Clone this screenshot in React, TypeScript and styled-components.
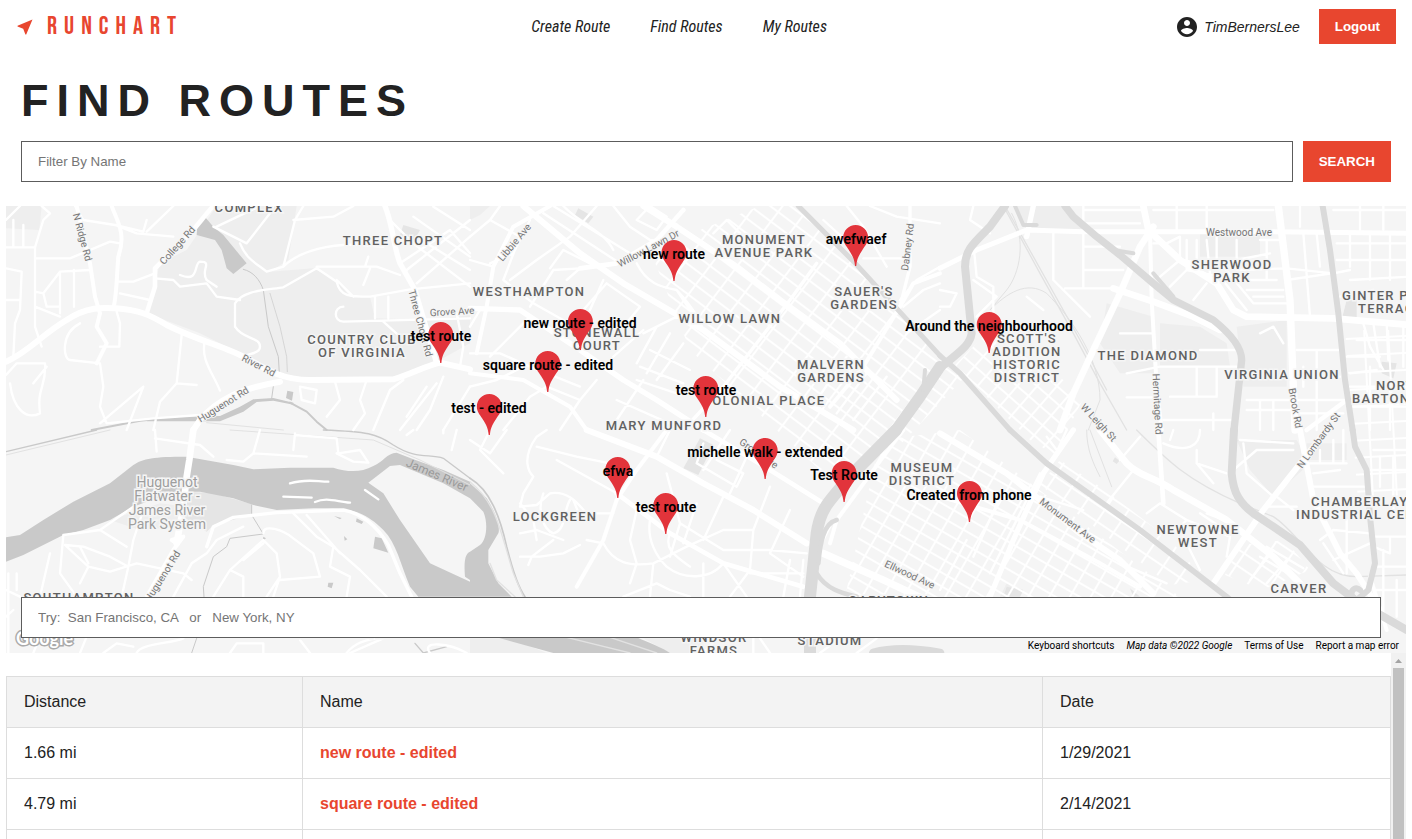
import React from "react";
import styled, { createGlobalStyle } from "styled-components";

const GlobalStyle = createGlobalStyle`
  *, *::before, *::after { box-sizing: border-box; }
  body {
    margin: 0;
    background: #fff;
    color: #222;
    font-family: Arial, "Liberation Sans", sans-serif;
    font-size: 16px;
  }
`;

const accent = "#e8462f";

const Page = styled.div`
  display: flex;
  flex-direction: column;
  height: 100vh;
  padding: 0 6px;
  overflow: hidden;
`;

const Header = styled.header`
  display: flex;
  justify-content: space-between;
  align-items: center;
  height: 53px;
  padding: 0 10px 0 9px;
  flex: none;
`;

const Brand = styled.a`
  display: flex;
  align-items: center;
  gap: 12px;
  color: ${accent};
  font-family: "Bebas Neue", "Roboto Condensed", "Liberation Sans Narrow", sans-serif;
  font-size: 25px;
  line-height: 30px;
  letter-spacing: 7px;
  text-decoration: none;
`;

const Nav = styled.nav`
  display: flex;
  gap: 40px;
`;

const NavLink = styled.a`
  color: #222;
  font-family: "Roboto Condensed", "Liberation Sans Narrow", sans-serif;
  font-size: 16px;
  font-style: italic;
  text-decoration: none;
`;

const Account = styled.div`
  display: flex;
  align-items: center;
`;

const UserName = styled.span`
  margin: 0 19px 0 5px;
  font-size: 14px;
  font-style: italic;
`;

const Button = styled.button<{ $tall?: boolean }>`
  height: ${(p) => (p.$tall ? 41 : 35)}px;
  padding: 0 16px;
  border: 0;
  background: ${accent};
  color: #fff;
  font-weight: bold;
  cursor: pointer;
`;

const Title = styled.h1`
  margin: 21px 0 14px 15px;
  font-size: 45px;
  line-height: 53px;
  letter-spacing: 8px;
  text-transform: uppercase;
  flex: none;
`;

const SearchForm = styled.form`
  display: flex;
  gap: 10px;
  margin: 0 15px 24px;
  flex: none;
`;

const TextBox = styled.input`
  flex: 1;
  min-width: 0;
  height: 41px;
  padding: 0 16px;
  border: 1px solid #5c5c5c;
  border-radius: 0;
  background: #fff;
  color: #222;
  &::placeholder { color: #757575; }
`;

const MapFrame = styled.section`
  position: relative;
  height: 447px;
  flex: none;
  overflow: hidden;
  background: #f5f5f5;
  font-family: Roboto, sans-serif;
`;

const MapDrawing = styled.svg`
  display: block;
  width: 100%;
  height: 100%;
`;

const Pin = styled.button`
  position: absolute;
  display: grid;
  justify-items: center;
  padding: 0;
  border: 0;
  background: none;
  transform: translateX(-50%);
  cursor: pointer;
  > * { grid-area: 1 / 1; }
`;

const PinLabel = styled.span`
  padding-top: 6px;
  color: #000;
  font-family: Roboto, sans-serif;
  font-size: 14px;
  font-weight: 600;
  line-height: 16px;
  white-space: nowrap;
`;

const LocationForm = styled.form`
  position: absolute;
  left: 15px;
  right: 25px;
  bottom: 15px;
  display: flex;
`;

const Attribution = styled.div`
  position: absolute;
  right: 0;
  bottom: 0;
  display: flex;
  gap: 12px;
  padding: 0 7px;
  background: rgba(245, 245, 245, 0.7);
  color: #000;
  font-size: 10px;
  line-height: 14px;
`;

const MapLink = styled.a`
  color: inherit;
  text-decoration: none;
`;

const Results = styled.section`
  display: flex;
  flex: 1;
  min-height: 0;
`;

const TableArea = styled.div`
  flex: 1;
  padding-top: 23px;
  overflow: hidden;
`;

const Scrollbar = styled.div`
  display: flex;
  flex-direction: column;
  align-items: center;
  width: 15px;
  background: #f1f1f1;
`;

const ScrollUp = styled.svg`
  width: 15px;
  height: 15px;
  flex: none;
`;

const Thumb = styled.div`
  flex: 1;
  width: 11px;
  background: #c1c1c1;
`;

const Table = styled.table`
  width: 100%;
  border-collapse: collapse;
  table-layout: fixed;
`;

const Column = styled.col<{ $share?: number }>`
  width: ${(p) => (p.$share ? `${p.$share}px` : "auto")};
`;

const cell = `
  height: 51px;
  padding: 0 17px;
  border: 1px solid #ddd;
  text-align: left;
`;

const HeadCell = styled.th`
  ${cell}
  background: #f3f3f3;
  font-weight: normal;
`;

const Cell = styled.td`
  ${cell}
`;

const RouteLink = styled.a`
  color: ${accent};
  font-weight: bold;
  text-decoration: none;
`;

/* ---- map data ---- */

type Stroke = [string, number];

interface Tile {
  x: number;
  y: number;
  parks?: string;
  darkParks?: string;
  water?: string;
  streams?: Stroke[];
  rails?: Stroke[];
  streets?: string;
  roads?: Stroke[];
  highways?: Stroke[];
}

/* Each tile is drawn at three units to the pixel. */
const tiles: Tile[] = [
  {
    x: 0,
    y: 200,
    parks:
      "M18 18H125L118 90L18 85zM650 18H890L865 180L810 215L940 205L1010 240L1050 290L1110 290L1125 355L1300 360L1410 345L1410 430L1320 480L1180 535L900 540L840 525L740 470L600 400L440 340L480 190L560 150z",
    darkParks: "M1210 75L1260 90L1240 125L1200 105z",
    water:
      "M610 45L640 80L670 105L740 190L700 222L680 205L665 150L645 120L590 105L592 75zM862 572l18 4l-4 26l-18 -8zM460 655L600 648L660 648L720 620L760 598L820 594L880 608L880 614L820 602L770 606L730 635L660 664L600 664L440 664z",
    streams: [
      ["M730 208C760 215 780 240 790 270L805 380L835 470L838 520M820 560L815 595", 3],
      ["M275 690L420 662L480 656M870 608L920 635L950 665L980 690", 6],
      ["M810 280L840 380L860 470L862 515", 2],
    ],
    rails: [["M620 668L850 690", 3]],
    streets:
      "M225 18L250 60L345 75L410 100L520 110M18 60L60 18M18 142H105L130 60L150 40L125 18M40 142V60M70 142V75M105 142V175H210L330 125L360 130M105 175V380L125 440M18 205L65 215L60 330L45 370L40 470M18 300H60M105 275L130 280L180 215L270 210M130 280L140 320L180 320M180 215V340M222 210V320M105 320L180 350M240 370C180 400 190 480 210 480L300 490L310 560L300 620L320 670L460 655L600 645M350 335L360 370L358 440L300 440M350 245L400 245L465 220M360 280L450 300M18 525L50 490L135 490C140 560 110 560 120 640C80 660 40 630 30 550M140 500L100 550M545 405L530 550L480 605L460 690M530 550L590 555M615 420C600 480 640 520 660 572M465 235L520 240L540 260L620 250L650 290L720 300M540 225C600 250 580 190 600 185C640 185 600 210 620 240L650 260M705 380V310C730 270 800 270 850 262L950 205M740 130L810 40L820 18M720 130C740 180 770 190 800 215L850 200L885 60L910 18M850 200C900 150 1000 130 1080 135L1150 140M880 60L1000 50L1060 18M640 80L740 130M950 205L1010 245C1020 290 1050 290 1110 290L1230 268L1410 250M705 380C730 420 780 410 780 440C780 460 750 460 730 470M345 75L430 95L440 60M440 95L520 18M650 80L780 18M950 200L1130 200L1200 225M1090 255L1110 205M1095 200L1105 170M1010 240L1060 290M1125 290V355M1165 290V355M1030 320C1000 320 1000 365 1030 365L1410 355M1150 365L1200 410M1200 190L1350 90L1410 160M1220 210L1410 60M1250 250L1410 110M1170 60L1240 130L1410 260M1280 130L1410 210M1240 50L1410 170M1300 20L1410 90M1370 340L1390 440L1380 500M900 565L905 600L945 610L950 570L900 560M1005 545L1020 600L980 650M1100 540L1080 600L1095 640L1060 690M1210 540L1170 570L1120 690M1330 530L1290 630L1250 690M1310 550L1200 690M1410 560L1330 690M1280 560L1220 650M380 690L430 560L300 670",
    roads: [
      ["M18 485C80 460 130 400 200 360C260 320 310 322 345 325C420 330 450 345 500 375C600 425 680 440 740 475C800 510 850 540 930 540L1180 538C1240 520 1270 500 1320 488L1410 508", 18],
      ["M580 690L600 660C650 600 720 565 840 545", 18],
      ["M230 18L270 190L285 290L300 340L290 380L320 430L290 490", 12],
      ["M1155 18C1180 80 1180 140 1200 190L1245 270L1310 490", 16],
      ["M640 18C600 60 590 90 500 170L465 205L465 260L440 340", 14],
      ["M335 18C350 60 380 100 355 170C350 230 350 290 340 325", 12],
    ],
  },
  {
    x: 470,
    y: 200,
    parks: "M0 18H60L30 45L0 60z",
    darkParks: "M325 25L370 50L355 70L315 45z",
    streets:
      "M0 110L60 60L150 110L100 240M60 190L130 160L180 60M0 180L70 200L110 140M60 60L90 18M120 240L200 180L300 110L380 18M250 210L330 205L290 240M240 205L280 150L390 205M220 40L450 190M250 18L480 160M280 18C340 80 400 90 430 150M500 60L540 18L590 50L560 90L500 60M430 18L480 80L540 120L620 130M340 330L410 250L510 320L460 380M400 240L360 330M180 320L250 210M100 240L190 310L350 400M0 380L30 330M60 470L110 420L180 350M0 460L90 460L180 500L330 560M0 560L80 540L160 500M100 690L180 590L230 560L330 600L380 540M270 690L330 600M420 690L520 540M520 400L620 350L700 390M430 470L520 390M500 490L560 380M530 520L600 400M560 540L640 430M500 540L620 580M510 500L640 550M540 450L660 510M440 600L620 680M500 190C530 250 570 260 620 270L700 390M700 390C680 330 620 270 620 270M730 100L770 60L810 100M1130 18L1180 80L1250 200M1060 60L1170 160M1200 18L1280 50L1410 70M1180 175H1310M1290 300L1340 240L1410 200M1300 320L1360 270L1410 250M1310 400L1410 330M1100 640L1190 520M1150 660L1250 530M1040 600L1130 470",
    roads: [
      ["M160 18L330 160L460 250L700 390L930 560L1150 690", 18],
      ["M520 18L620 80L800 200L930 300L1110 430L1280 600", 18],
      ["M0 325L150 330L330 450L460 540L560 600L700 690", 16],
      ["M0 520L160 540L300 620L350 690", 12],
      ["M240 18L130 80L70 200L50 320L20 460", 12],
      ["M330 205L440 190L560 120L640 30", 14],
      ["M1410 220L1330 250L1290 320L1180 500L1080 620", 12],
      ["M1320 18V200L1290 320", 10],
      ["M640 690L760 560L860 430L960 300L1040 190", 10],
    ],
    highways: [
      ["M985 18L1156 190L1410 467", 15],
      ["M1410 500L1350 590L1278 690", 34],
      ["M1365 510L1360 570", 12],
    ],
  },
  {
    x: 940,
    y: 200,
    parks:
      "M230 18H380L440 90H260zM780 100H960V170H780zM500 310L640 350L645 520L540 520L480 430zM660 370L780 380L860 430L870 500H660zM890 380L1040 360L1040 560H910z",
    darkParks: "M1325 485L1370 490L1360 535L1325 520zM1205 360L1220 300L1250 300L1250 360z",
    rails: [
      ["M190 18L300 220L400 400L480 550L560 690M195 18L420 420L500 570", 4],
      ["M215 40C260 120 240 220 200 270L150 330C200 280 260 240 320 280C400 360 480 480 480 600L445 690", 3],
    ],
    streets:
      "M100 18L90 60L150 100M430 18V260M430 140H540M430 210H550M375 265H530M340 100V240L450 350M430 30H610M430 70H600M710 18V90M800 18V90M640 30H1000M640 130H680L720 110V180M660 230L720 180L850 200L940 310H1040M690 260L740 210L840 230L920 330M760 300L800 250M740 120V210M770 120V190M800 120L810 220M830 110V200M890 180V120M890 180L990 160M890 210L1040 205L1180 220L1230 210M900 240H1010M920 270H1030M940 290H1030M1040 240L1210 215M960 120H1030M980 120V240M1080 18V80M1130 100L1140 200M1090 100L1110 350M1180 30H1410M1260 18V90M1330 18V90M1230 100V200M1290 100V240M1350 100V240M1190 130H1410M1190 180H1410M1230 240L1410 230M1200 290L1300 270M1270 370L1290 440L1330 510M1300 370L1320 500M1340 370L1345 480M1390 370V500M1250 420H1410M1220 470H1320M1230 520L1310 510M1230 560H1410M1240 620H1410M1290 500V690M1350 560V690M1070 450H1200M1070 530H1200M1070 600H1210M1070 640H1210M1130 450V690M1090 500V560M960 400L1000 380L1030 430M780 450H890M560 520L660 500H890M770 500V590L690 590M830 500V590H770M560 592H650M920 600H1050M920 630H1050M960 600V690M1000 600V690M670 660H880M820 640V690M640 400H540M100 130L110 230L160 260L160 340M0 270L50 280L30 320L0 320M100 240L170 290L110 350M260 290L310 330",
    roads: [
      ["M0 205L110 150L260 90L430 95L1000 95L1410 100", 15],
      ["M260 110L280 18", 16],
      ["M610 18L625 90L720 180L830 250L880 330L920 350L1180 355L1410 375", 20],
      ["M1015 18L1050 300L1065 690", 22],
      ["M640 80L600 140L540 280L460 450L400 580L360 690", 20],
      ["M520 265L640 305L760 350L840 390", 20],
      ["M630 90L635 300L650 560L665 690", 12],
      ["M1220 600L1100 690", 14],
    ],
    highways: [
      ["M375 18L400 50L470 110L540 165L640 250L700 300L820 360C870 400 905 440 905 480L882 690", 22],
      ["M470 110L520 150L580 160M640 220L700 290", 12],
      ["M1148 18L1170 150L1195 340L1215 540L1238 690", 18],
      ["M195 18L150 80C100 130 75 150 75 200L85 300L95 400C90 440 50 460 0 505", 24],
      ["M225 18L250 75L290 75", 12],
      ["M0 467L60 520L210 690", 16],
    ],
  },
  {
    x: 0,
    y: 430,
    parks: "M330 270L480 220L560 230L540 290L420 300z",
    darkParks: "M560 185L640 190L755 222L755 255L640 285L620 305L550 260z",
    water:
      "M18 322L60 315L130 270L220 215L330 160L400 105C430 85 460 80 560 80L700 105L760 118L870 113L1000 113C1040 125 1080 130 1120 108C1150 95 1160 70 1190 68L1240 88L1330 120L1410 155V205L1330 160L1200 105L1170 108L1105 158L1150 190L1200 270L1290 400L1410 455V669H1410V500H1255L1230 470C1200 400 1190 340 1150 300C1100 250 1060 238 1000 235L940 235L830 240L760 225L700 205L600 185L560 185L480 200L400 230L330 270L250 300L190 315L130 345L70 375L18 395zM1395 440C1390 380 1400 370 1410 365V450zM1125 320L1145 325L1165 368L1120 355zM985 458H1000L995 475L983 470zM1070 265L1090 275L1085 282L1068 275zM1002 258L1025 264L1020 268zM1032 318L1042 328L1034 332zM790 320L798 325L788 332z",
    streams: [
      ["M755 225V255L790 312L690 325L680 350L640 380L610 470L612 500M590 625L575 669", 3],
      ["M1245 640L1270 669L1340 650", 4],
      ["M18 65L290 0M970 0C1100 5 1130 10 1180 45C1250 90 1290 70 1330 85L1410 145", 4],
    ],
    rails: [["M18 75L330 0M690 0L1120 30L1260 90L1410 165", 3]],
    streets:
      "M870 160C920 145 950 155 985 155M850 200L935 203M945 216C980 200 1010 215 1050 218M1095 180L1135 208M18 480L60 500M50 430V480M190 315L300 300L400 230M150 370L120 500M190 315L180 430L230 500M195 345L265 410L330 425L410 400L550 430L575 450M265 410L240 460M300 300L380 350M430 240L400 330L385 410L365 500M195 345L250 350L330 380L385 410M240 350L265 400M520 500L575 400L620 370L650 330L730 290M640 500L690 420L790 330L830 370L840 440L800 500M690 420L730 440V500M730 390L790 340M790 310C790 280 850 300 880 325L940 370L960 440L840 450M880 250L950 320L1000 350L1080 420L1160 500M1000 350L990 410L1050 440L1040 500M920 255L1020 370M840 440L820 500M465 0L470 65M465 25L600 45L640 80M680 90L730 95L760 70L920 80M760 70L780 0M885 10L880 60M885 15L1010 25L1015 70L1080 60L1105 98L1060 95L1010 70M1240 0L1220 15M1330 10V0M1370 0L1355 60M18 560L40 540M240 669L260 620M310 669L350 640L400 650M410 669C420 640 520 640 550 625M690 669L710 640H790V669M930 669L900 630M1040 669C1070 630 1120 625 1150 625L1050 669M1290 669C1260 630 1350 640 1400 669M100 669L120 620M25 430V669",
    roads: [
      ["M580 0L568 90L560 140L550 230L530 340", 20],
      ["M530 340L515 330L550 320L520 360L440 500", 12],
      ["M620 350L640 290L700 262L830 248L1030 240C1110 255 1150 320 1165 345L1200 430L1235 500", 10],
    ],
  },
  {
    x: 470,
    y: 430,
    parks: "M0 625H120L230 669H0zM520 625H700V669H600z",
    darkParks: "M690 25L730 45L685 135L640 115z",
    water:
      "M0 160L50 205C85 260 90 300 85 310L55 360L55 400L85 460L125 500H0V365L30 345C50 330 55 280 40 245L0 205zM80 622H500C540 640 580 655 600 669H250z",
    streams: [["M0 145C60 180 90 260 110 350C130 430 150 480 165 500", 5]],
    rails: [["M0 155C80 220 90 300 130 430L160 500M60 400L80 450L135 500M290 622L480 669M420 622L560 669", 4]],
    streets:
      "M60 0L30 60L100 130M0 30L60 70L110 0M200 20C150 90 180 130 190 140L160 190L150 230L200 225L240 190C300 180 330 230 350 250L430 250M150 220L190 270L200 330M220 190C200 240 220 300 250 310C290 300 280 240 300 210M200 20L230 0M200 50L320 80L420 100M260 90L440 190M150 310L200 300L280 330M350 330L400 340M310 210L330 260M150 380H210L280 370L330 345M175 405L185 380L250 330M500 240L480 330L500 400L480 460M540 270C530 330 560 380 590 410C640 450 720 450 760 400M400 340C430 400 480 410 550 400L650 350L760 300L850 300M600 310C580 360 620 380 660 410M590 130L630 280L600 380M760 200L700 330M630 280L760 360H900L1010 370M850 300L840 420L780 500M700 400V500M760 400L830 500M960 390L940 500M900 370L1000 440M1000 390L990 500M840 430H1000M550 400L540 500M460 500L560 460L600 480L660 500M600 0L560 80M700 40L680 100L800 170L820 130L740 90M830 80L780 190M900 170L850 300M960 240L900 370M640 340L680 220M780 0L700 120M1090 270L1060 330M850 625V669M900 669L870 625M700 669L740 625M1050 669L1110 625M1160 669L1220 625",
    roads: [
      ["M350 0L560 80L700 160L850 240L1010 340", 18],
      ["M440 190L600 310L760 400L1000 470", 14],
      ["M1060 370L1240 450L1410 530", 22],
      ["M590 0L500 120L440 210L400 330L320 470", 12],
      ["M700 0L900 120L1060 220", 14],
      ["M1080 340L1100 270L1240 80L1300 0", 12],
    ],
    highways: [
      ["M1278 0L1150 130C1070 220 1050 240 1040 310L1020 500V669", 36],
      ["M1040 430C1070 480 1120 490 1160 500M1100 270C1060 280 1050 340 1045 400", 14],
      ["M1210 669C1260 655 1330 655 1410 669", 26],
    ],
  },
  {
    x: 940,
    y: 430,
    parks: "M890 30H1070L1110 100L1000 200L930 120zM180 500L200 460L250 480L240 500zM1100 40H1220V90H1100z",
    darkParks: "M525 82L538 92L530 102L518 94zM570 475L600 500H580zM200 470L250 480L240 500H190z",
    rails: [
      ["M590 0C680 90 740 150 900 220L1000 260C1080 310 1130 440 1250 440L1400 435", 4],
      ["M440 0C440 60 460 100 480 140M450 0L515 170", 3],
    ],
    streets:
      "M670 40C740 70 780 50 780 0M770 60V100L820 160M770 100L860 130M900 30L1060 40M910 40L920 130L1000 200M880 120L950 60H1060M1100 100H1220M1140 60V100M1180 30V100M1210 0V100M1120 170H1280M1120 130L1200 120M1290 120H1400M1320 80V170M1300 60H1400M1360 80V240M1140 330L1180 300L1290 310M1150 340L1210 430M1180 390L1290 340M1220 270V430M1300 320H1400M1300 350L1350 370V320M1310 410H1400M1330 360V560M1370 450V560M1310 480H1400M620 250L660 220L740 270L700 310M740 270L870 320L860 380M800 250L880 280M840 290L780 250M580 120L500 220M430 240L300 200M300 130L240 250M980 350L1090 415M960 380L1060 440M1000 360L930 450M1040 390L980 460M1010 200L1060 240M980 230H1070M730 320L780 420M540 400L680 460M180 200L100 380M80 330L0 480M240 250L150 430M540 90L600 20M700 0L690 30M350 60L320 20M380 0L330 110",
    roads: [
      ["M0 10L100 70L200 130L300 210L420 310L540 390L640 490", 18],
      ["M400 0L310 130L220 330L150 500", 16],
      ["M480 0L560 100C600 140 640 140 700 180L860 270L1000 380L1080 460", 20],
      ["M655 0L670 220", 14],
      ["M1080 0L1120 210L1200 370L1250 430L1320 540", 18],
      ["M1160 0L970 240L820 460", 18],
      ["M0 200L240 270L480 400L600 470", 12],
      ["M1290 440L1340 600", 12],
    ],
    highways: [
      ["M210 0L320 100L600 300L860 500L930 560", 17],
      ["M882 0L875 130C880 190 900 220 940 250L1000 290L1080 345L1180 460L1260 520L1400 600", 24],
      ["M1238 0L1245 50L1280 120L1290 260L1305 400L1285 480L1250 510C1220 500 1240 460 1260 480", 18],
    ],
  },
];

interface Grid {
  id: string;
  angle: number;
  w: number;
  h: number;
  area: string;
}

const grids: Grid[] = [
  { id: "avenues", angle: 37, w: 22, h: 12, area: "M650 250L760 206L800 206L962 380L900 445L820 470L690 350z" },
  { id: "museum", angle: 30, w: 18, h: 12, area: "M880 440L960 430L1000 460L1180 597H845L862 520z" },
  { id: "scotts", angle: 41, w: 15, h: 13, area: "M985 335L1020 350L1085 395L1055 455L1030 440L955 365z" },
  { id: "newtowne", angle: 34, w: 20, h: 14, area: "M1105 490L1170 540L1205 580L1170 585L1040 485L1060 460zM1240 545L1285 540L1310 570L1262 590L1225 575z" },
  { id: "northside", angle: -3, w: 24, h: 17, area: "M1345 330H1406V500H1358z" },
];

const areaLabels: { x: number; y: number; lines: string[]; start?: boolean }[] = [
  { x: 249, y: 212, lines: ["COMPLEX"] },
  { x: 393, y: 245, lines: ["THREE CHOPT"] },
  { x: 529, y: 296, lines: ["WESTHAMPTON"] },
  { x: 362, y: 344, lines: ["COUNTRY CLUB", "OF VIRGINIA"] },
  { x: 764, y: 244, lines: ["MONUMENT", "AVENUE PARK"] },
  { x: 730, y: 323, lines: ["WILLOW LAWN"] },
  { x: 597, y: 337, lines: ["STONEWALL", "COURT"] },
  { x: 864, y: 296, lines: ["SAUER'S", "GARDENS"] },
  { x: 831, y: 369, lines: ["MALVERN", "GARDENS"] },
  { x: 764, y: 405, lines: ["COLONIAL PLACE"] },
  { x: 664, y: 430, lines: ["MARY MUNFORD"] },
  { x: 922, y: 472, lines: ["MUSEUM", "DISTRICT"] },
  { x: 555, y: 521, lines: ["LOCKGREEN"] },
  { x: 1027, y: 343, lines: ["SCOTT'S", "ADDITION", "HISTORIC", "DISTRICT"] },
  { x: 1148, y: 360, lines: ["THE DIAMOND"] },
  { x: 1282, y: 379, lines: ["VIRGINIA UNION"] },
  { x: 1232, y: 269, lines: ["SHERWOOD", "PARK"] },
  { x: 1342, y: 300, lines: ["GINTER PARK"], start: true },
  { x: 1358, y: 313, lines: ["TERRACE"], start: true },
  { x: 1376, y: 390, lines: ["NORTH"], start: true },
  { x: 1352, y: 403, lines: ["BARTON HEIGHTS"], start: true },
  { x: 1311, y: 506, lines: ["CHAMBERLAYNE"], start: true },
  { x: 1296, y: 519, lines: ["INDUSTRIAL CENTER"], start: true },
  { x: 1198, y: 534, lines: ["NEWTOWNE", "WEST"] },
  { x: 1299, y: 593, lines: ["CARVER"] },
  { x: 889, y: 605, lines: ["CARYTOWN"] },
  { x: 79, y: 602, lines: ["SOUTHAMPTON"] },
  { x: 346, y: 638, lines: ["STRATFORD HILLS"] },
  { x: 714, y: 642, lines: ["WINDSOR", "FARMS"] },
  { x: 830, y: 645, lines: ["STADIUM"] },
  { x: 1180, y: 638, lines: ["DISTRICT"] },
];

const streetLabels: [string, number, number, number][] = [
  ["N Ridge Rd", 83, 237, 75],
  ["College Rd", 177, 245, -48],
  ["Huguenot Rd", 223, 404, -32],
  ["River Rd", 259, 365, 27],
  ["Three Chopt Rd", 421, 323, 75],
  ["Grove Ave", 452, 311, -3],
  ["Libbie Ave", 514, 242, -50],
  ["Willow Lawn Dr", 648, 248, -28],
  ["Dabney Rd", 907, 247, -83],
  ["Westwood Ave", 1239, 232, 0],
  ["Hermitage Rd", 1158, 404, 87],
  ["W Leigh St", 1099, 422, 47],
  ["Brook Rd", 1296, 408, 80],
  ["N Lombardy St", 1318, 440, -54],
  ["Monument Ave", 1068, 520, 37],
  ["Ellwood Ave", 910, 574, 25],
  ["Grove Ave", 759, 453, 35],
  ["Huguenot Rd", 162, 576, -58],
];

const pins: { name: string; x: number; y: number }[] = [
  { name: "awefwaef", x: 856, y: 225 },
  { name: "new route", x: 674, y: 240 },
  { name: "new route - edited", x: 580, y: 309 },
  { name: "Around the neighbourhood", x: 989, y: 312 },
  { name: "test route", x: 441, y: 322 },
  { name: "square route - edited", x: 548, y: 351 },
  { name: "test route", x: 706, y: 376 },
  { name: "test - edited", x: 489, y: 394 },
  { name: "michelle walk - extended", x: 765, y: 438 },
  { name: "efwa", x: 618, y: 457 },
  { name: "Test Route", x: 844, y: 461 },
  { name: "Created from phone", x: 969, y: 481 },
  { name: "test route", x: 666, y: 493 },
];

const routes = [
  { distance: "1.66 mi", name: "new route - edited", date: "1/29/2021" },
  { distance: "4.79 mi", name: "square route - edited", date: "2/14/2021" },
  { distance: "2.31 mi", name: "test route", date: "2/14/2021" },
];

const view = { x: 6, y: 206, w: 1400, h: 447 };

function Layer({ draw }: { draw: (tile: Tile) => React.ReactNode }) {
  return (
    <>
      {tiles.map((tile) => (
        <g key={`${tile.x}-${tile.y}`} transform={`translate(${tile.x} ${tile.y}) scale(${1 / 3})`}>
          {draw(tile)}
        </g>
      ))}
    </>
  );
}

const strokes = (list: Stroke[] | undefined, color: string) =>
  list?.map(([d, width]) => (
    <path key={d} d={d} fill="none" stroke={color} strokeWidth={width} strokeLinejoin="round" strokeLinecap="round" />
  ));

function StreetMap() {
  return (
    <MapDrawing
      viewBox={`${view.x} ${view.y} ${view.w} ${view.h}`}
      preserveAspectRatio="xMidYMid slice"
      aria-label="Map of Richmond, Virginia"
    >
      <defs>
        {grids.map((g) => (
          <pattern key={g.id} id={g.id} width={g.w} height={g.h} patternUnits="userSpaceOnUse" patternTransform={`rotate(${g.angle})`}>
            <path d={`M0 1H${g.w}M1 0V${g.h}`} stroke="#fff" strokeWidth="2" />
          </pattern>
        ))}
      </defs>
      <Layer
        draw={(t) => (
          <>
            <path d={t.parks} fill="#eee" />
            <path d={t.darkParks} fill="#e5e5e5" />
            <path d={t.water} fill="#c9c9c9" />
            {strokes(t.streams, "#c9c9c9")}
            {strokes(t.rails, "#e2e2e2")}
          </>
        )}
      />
      {grids.map((g) => (
        <path key={g.id} d={g.area} fill={`url(#${g.id})`} />
      ))}
      <Layer
        draw={(t) => (
          <path d={t.streets} fill="none" stroke="#fff" strokeWidth="7" strokeLinejoin="round" strokeLinecap="round" />
        )}
      />
      <Layer draw={(t) => strokes(t.roads, "#fff")} />
      <Layer draw={(t) => strokes(t.highways, "#dadada")} />
      <g fontSize="13" fontWeight="500" letterSpacing="0.1em" fill="#616161" stroke="#f5f5f5" strokeWidth="3" paintOrder="stroke">
        {areaLabels.map((label) =>
          label.lines.map((line, i) => (
            <text key={`${label.x}-${line}`} x={label.x} y={label.y + i * 13} textAnchor={label.start ? "start" : "middle"}>
              {line}
            </text>
          ))
        )}
      </g>
      <g fontSize="10" fill="#757575" stroke="#f5f5f5" strokeWidth="2" paintOrder="stroke" textAnchor="middle">
        {streetLabels.map(([name, x, y, angle]) => (
          <text key={`${name}-${x}`} transform={`translate(${x} ${y}) rotate(${angle})`} dy="4">
            {name}
          </text>
        ))}
      </g>
      <text transform="translate(437 475) rotate(23)" dy="4" fontSize="12" fill="#999" textAnchor="middle">
        James River
      </text>
      <g fontSize="14" fill="#9e9e9e" stroke="#f5f5f5" strokeWidth="3" paintOrder="stroke" textAnchor="middle">
        {["Huguenot", "Flatwater -", "James River", "Park System"].map((line, i) => (
          <text key={line} x="167" y={487 + i * 14}>
            {line}
          </text>
        ))}
      </g>
      <text x="16" y="645" fontFamily="Lato, sans-serif" fontSize="18" fontWeight="700" fill="#fff" stroke="#aaa" strokeWidth="3" paintOrder="stroke">
        Google
      </text>
    </MapDrawing>
  );
}

export default function App() {
  const stop = (e: React.FormEvent) => e.preventDefault();
  return (
    <>
      <GlobalStyle />
      <Page>
        <Header>
          <Brand href="#home">
            <svg width="20" height="20" viewBox="0 0 24 24" fill="currentColor" aria-hidden="true">
              <path d="M21 3L3 10.53v.98l6.84 2.65L12.48 21h.98L21 3z" />
            </svg>
            RUNCHART
          </Brand>
          <Nav>
            <NavLink href="#create">Create Route</NavLink>
            <NavLink href="#find">Find Routes</NavLink>
            <NavLink href="#mine">My Routes</NavLink>
          </Nav>
          <Account>
            <svg width="24" height="24" viewBox="0 0 24 24" fill="currentColor" aria-hidden="true">
              <path d="M12 2C6.48 2 2 6.48 2 12s4.48 10 10 10 10-4.48 10-10S17.52 2 12 2zm0 3c1.66 0 3 1.34 3 3s-1.34 3-3 3-3-1.34-3-3 1.34-3 3-3zm0 14.2c-2.5 0-4.71-1.28-6-3.22.03-1.99 4-3.08 6-3.08 1.99 0 5.97 1.09 6 3.08-1.29 1.94-3.5 3.22-6 3.22z" />
            </svg>
            <UserName>TimBernersLee</UserName>
            <Button type="button">Logout</Button>
          </Account>
        </Header>

        <Title>Find Routes</Title>

        <SearchForm onSubmit={stop}>
          <TextBox type="text" aria-label="Filter by name" placeholder="Filter By Name" />
          <Button $tall type="submit">SEARCH</Button>
        </SearchForm>

        <MapFrame>
          <StreetMap />
          {pins.map((pin) => (
            <Pin
              key={`${pin.x}-${pin.y}`}
              type="button"
              style={{
                left: `${((pin.x - view.x) / view.w) * 100}%`,
                top: `${((pin.y - view.y) / view.h) * 100}%`,
              }}
            >
              <svg width="26" height="42" viewBox="0 0 26 42" aria-hidden="true">
                <path
                  fill="#e2343b"
                  d="M13 0C6 0 .5 5.600.5 12.500c0 4.900 3 8.200 5.600 12.300 3.100 5 5.600 8.200 6.300 16.200h1.200c.7-8 3.200-11.200 6.300-16.200 2.600-4.100 5.600-7.400 5.600-12.300C25.500 5.600 20 0 13 0z"
                />
              </svg>
              <PinLabel>{pin.name}</PinLabel>
            </Pin>
          ))}
          <LocationForm onSubmit={stop}>
            <TextBox
              type="text"
              aria-label="Go to a place"
              placeholder={"Try:\u00a0 San Francisco, CA \u00a0 or \u00a0 New York, NY"}
            />
          </LocationForm>
          <Attribution>
            <MapLink href="#shortcuts">Keyboard shortcuts</MapLink>
            <em>Map data ©2022 Google</em>
            <MapLink href="#terms">Terms of Use</MapLink>
            <MapLink href="#report">Report a map error</MapLink>
          </Attribution>
        </MapFrame>

        <Results>
          <TableArea>
            <Table>
              <colgroup>
                <Column $share={296} />
                <Column $share={740} />
                <Column />
              </colgroup>
              <thead>
                <tr>
                  <HeadCell scope="col">Distance</HeadCell>
                  <HeadCell scope="col">Name</HeadCell>
                  <HeadCell scope="col">Date</HeadCell>
                </tr>
              </thead>
              <tbody>
                {routes.map((route) => (
                  <tr key={route.name}>
                    <Cell>{route.distance}</Cell>
                    <Cell>
                      <RouteLink href="#route">{route.name}</RouteLink>
                    </Cell>
                    <Cell>{route.date}</Cell>
                  </tr>
                ))}
              </tbody>
            </Table>
          </TableArea>
          <Scrollbar aria-hidden="true">
            <ScrollUp viewBox="0 0 15 15">
              <path d="M4 10L7.500 6L11 10z" fill="#a3a3a3" />
            </ScrollUp>
            <Thumb />
          </Scrollbar>
        </Results>
      </Page>
    </>
  );
}
